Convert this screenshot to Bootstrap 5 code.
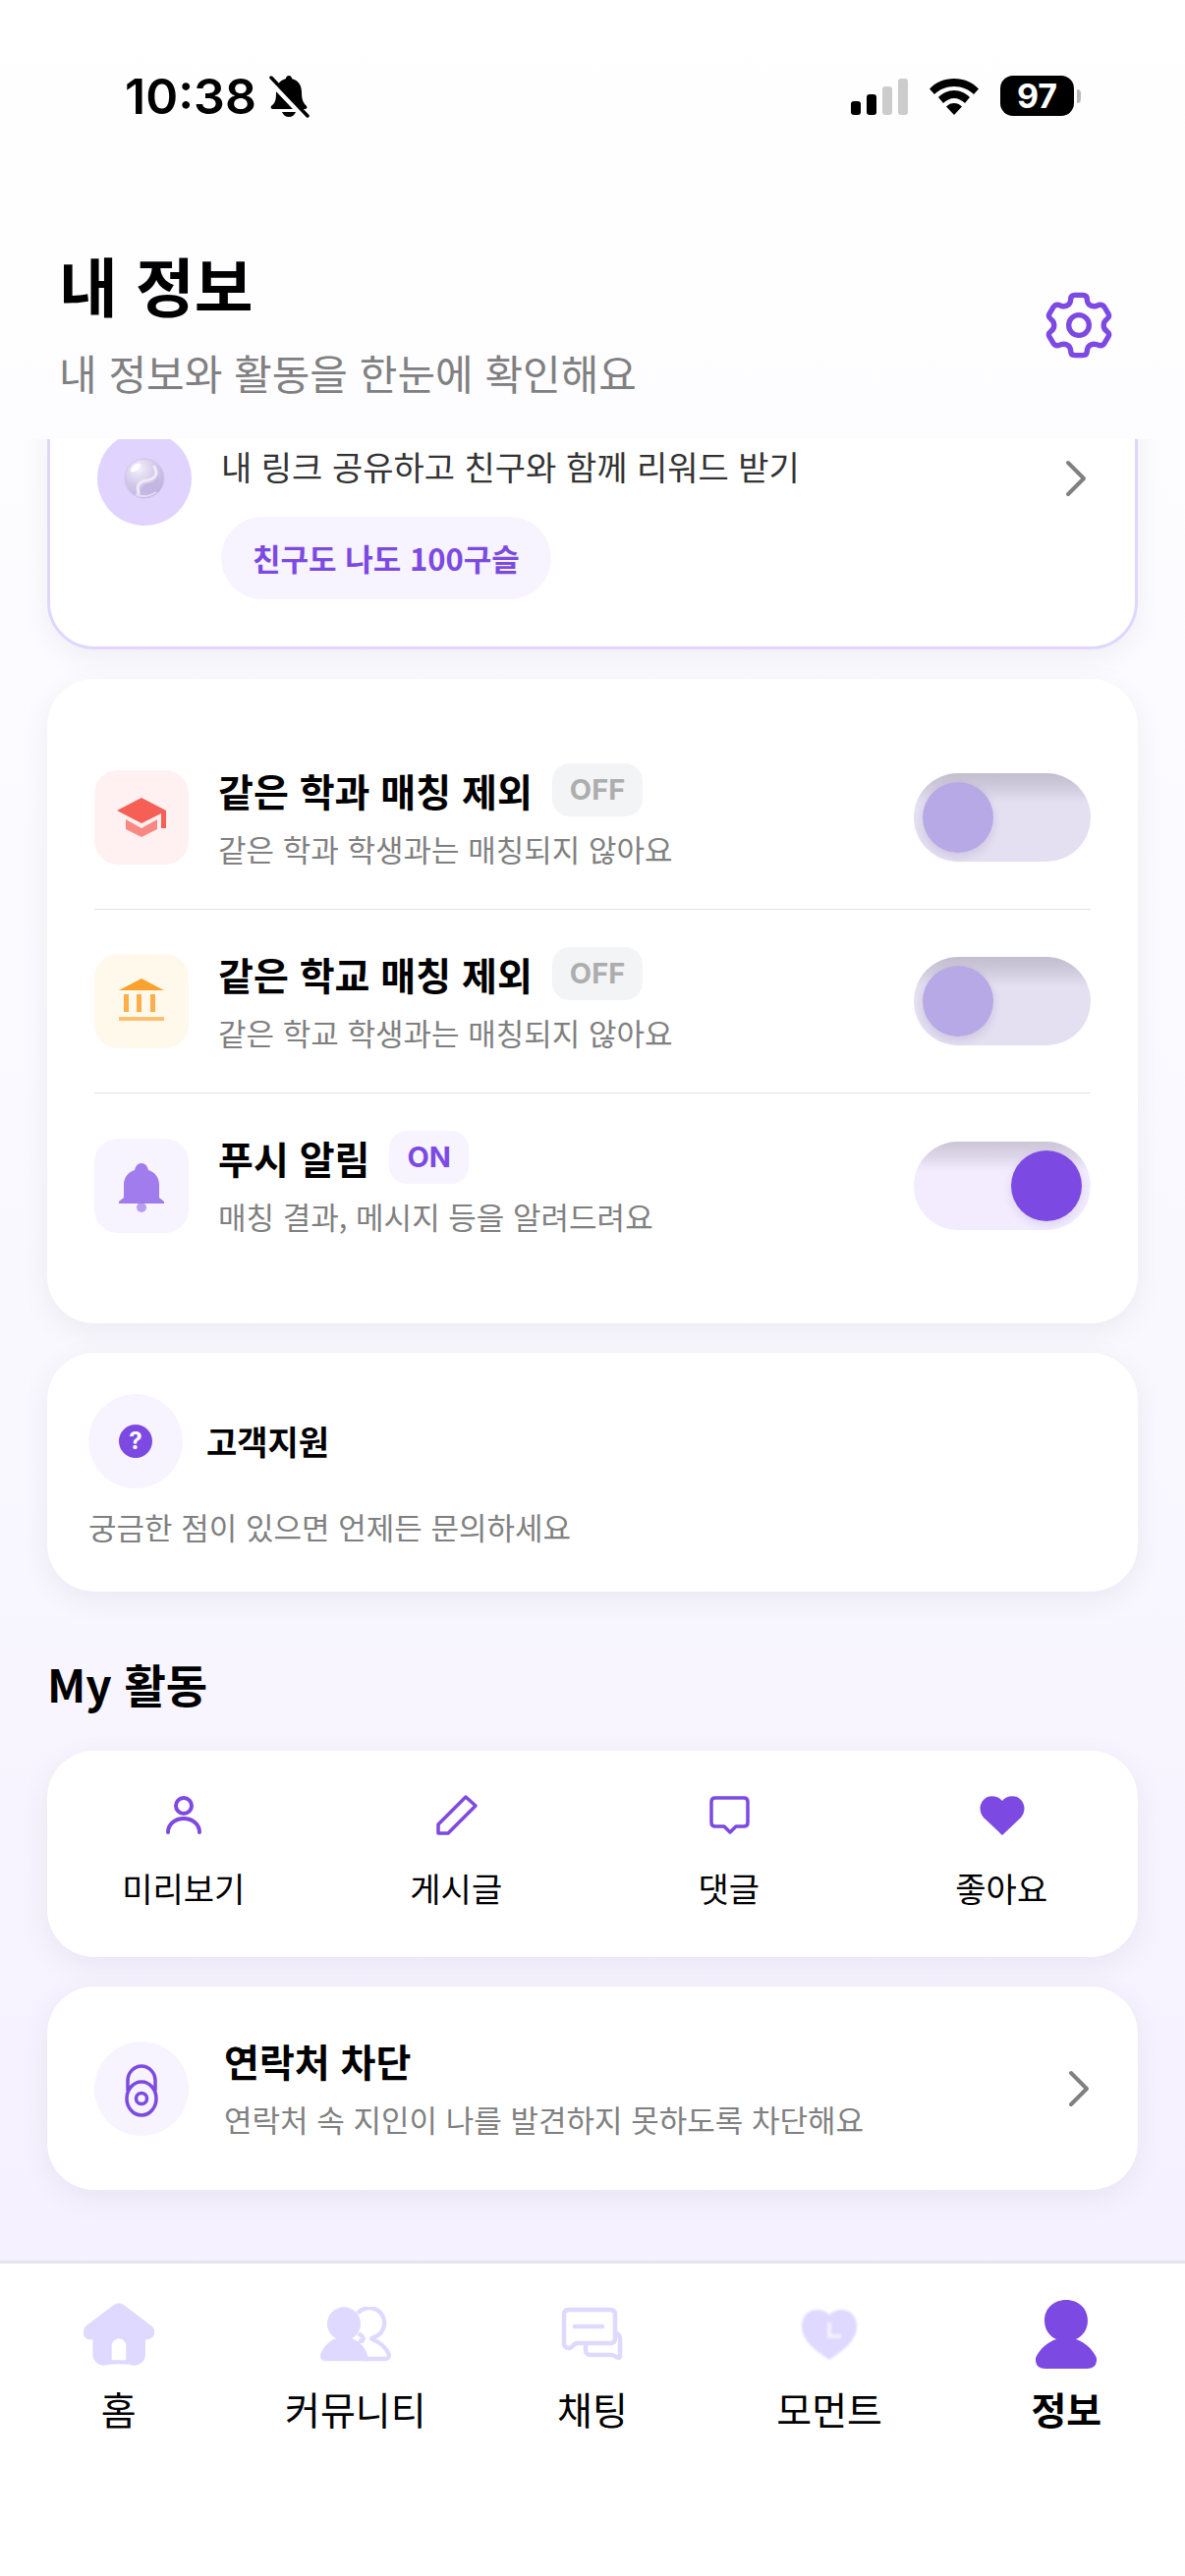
<!DOCTYPE html>
<html lang="ko">
<head>
<meta charset="utf-8">
<meta name="viewport" content="width=device-width, initial-scale=1">
<title>내 정보</title>
<link href="https://cdn.jsdelivr.net/npm/bootstrap@5.3.0/dist/css/bootstrap.min.css" rel="stylesheet">
<style>
:root{--violet:#7c4ae2;--lilac:#e0d6ff;--mist:#f7f4ff;--muted:#808080}
body{font-family:"Noto Sans CJK KR","Noto Sans",sans-serif;font-size:31px;line-height:48px;color:#000;background:linear-gradient(180deg,#fff 0%,#fdfcff 17%,#f9f8ff 52%,#f6f2ff 80%,#f5f0ff 100%)}
a{color:inherit;text-decoration:none}
svg{display:block;flex:none}
.status-bar{height:195px;padding:0 106px 0 127px;font-family:Inter,"Liberation Sans",sans-serif}
.status-left{gap:12px}
.status-right{gap:22px}
.clock{font-size:50px;font-weight:600}
.battery{width:75px;height:41px;border-radius:13px;background:#000;color:#fff;font-size:34px;font-weight:700;line-height:41px}
.battery-nub{width:4px;height:14px;border-radius:0 6px 6px 0;background:#b8b8b8;margin-left:3px}
.page-head{height:252px;padding:52px 72px 0 60px}
.page-title{font-size:65px;line-height:84px;font-weight:700}
.page-sub{font-size:42px;line-height:60px;margin-top:18px;color:var(--muted)}
.gear-btn{width:72px;height:72px;margin-top:48px}
.stack{gap:30px;padding:0 48px 72px}
.scroll-top{margin-top:-134px}
.panel{--bs-card-border-width:0;--bs-card-border-radius:48px;--bs-card-bg:#fff;--bs-card-color:#000;box-shadow:0 8px 32px rgba(10,5,30,.06)}
.invite{--bs-card-border-width:3px;--bs-card-border-color:var(--lilac);padding:48px}
.invite-text{padding-top:87px;margin-left:30px;gap:27px}
.invite-copy{font-size:34px;color:#333}
.reward{line-height:84px;border-radius:42px;padding:0 32px;background:var(--mist);color:var(--violet);font-weight:600}
.disc{width:96px;height:96px;flex:none}
.settings{padding:48px 48px 47px}
.setting{height:187px;border-bottom:1px solid #e3e3e6}
.setting:last-child{border-bottom:0}
.tile{width:96px;height:96px;border-radius:24px;flex:none}
.setting-text{margin-left:30px}
.block-text{margin-left:36px}
.item-title{font-size:39px;line-height:54px;font-weight:600}
.item-sub{line-height:48px;color:var(--muted);margin-top:9px}
.state{font-family:Inter,"Liberation Sans",sans-serif;font-size:29px;line-height:54px;font-weight:700;border-radius:18px;padding:0 18px;margin-left:20px;background:#f3f4f6;color:#adadad}
.state-on{background:var(--mist);color:var(--violet)}
.switch{appearance:none;width:180px;height:90px;flex:none;margin:0;border-radius:45px;padding:9px;background:linear-gradient(180deg,#c3bdcf 0,#d0cadd 14px,#e4dff1 30px);cursor:pointer}
.switch::before{content:"";display:block;width:72px;height:72px;border-radius:50%;background:#b7a9e6;box-shadow:0 4px 10px rgba(60,30,120,.12)}
.switch:checked{background:linear-gradient(180deg,#cbc5d6 0,#dcd5e8 14px,#f3ecff 30px)}
.switch:checked::before{margin-left:auto;background:var(--violet)}
.support{padding:42px}
.support-title{font-size:34px;font-weight:600;margin-left:24px}
.support-sub{color:var(--muted);margin-top:15px;line-height:48px}
.q-mark{width:34px;height:34px;background:var(--violet);color:#fff;font-family:Inter,sans-serif;font-size:24px;line-height:34px;font-weight:700}
.section-title{font-size:46px;line-height:66px;font-weight:600;margin:30px 0 6px}
.activity{padding:42px 0 46px}
.activity a{gap:26px;font-size:34px}
.contact{padding:0 48px;height:207px}
.tab-bar{border-top:3px solid #e3e6ea;background:#fff;padding:35px 0 142px}
.tab-bar a{font-size:39px;line-height:57px;gap:10px}
.tab-icon{height:74px}
</style>
</head>
<body>
<div class="min-vh-100 d-flex flex-column">
<div class="status-bar d-flex align-items-center justify-content-between">
  <div class="status-left d-flex align-items-center">
    <span class="clock">10:38</span>
    <svg width="42" height="44" viewBox="0 0 42 44" aria-label="무음"><path d="M21 1C22.500 1 24 2.200 24 4C31 6 34 11 34 18C34 26 36 29 39 32C40 34 39 35 37 35H5C3 35 2 34 3 32C7 29 8 26 8 18C8 11 11 6 18 4C18 2.200 19.500 1 21 1ZM14 38H28Q26 43 21 43T14 38Z"/><path d="M0 5L37 44" stroke="#fff" stroke-width="5"/><path d="M3 3L40 42" stroke="#000" stroke-width="3.500" stroke-linecap="round"/></svg>
  </div>
  <div class="status-right d-flex align-items-center">
    <svg width="58" height="38" viewBox="0 0 58 38"><rect y="24" width="10" height="14" rx="3"/><rect x="16" y="17" width="10" height="21" rx="3"/><rect x="32" y="9" width="10" height="29" rx="3" fill="#ccc"/><rect x="48" y="1" width="10" height="37" rx="3" fill="#ccc"/></svg>
    <svg width="50" height="38" viewBox="0 0 50 38"><path d="M25 1C15 1 6 5 0 11.500L5 17C10 12 17 9 25 9S40 12 45 17L50 11.500C44 5 35 1 25 1ZM25 13C18.500 13 13 16 9 20L14 26C17 23 21 21 25 21S33 23 36 26L41 20C37 16 31.500 13 25 13ZM25 26C22 26 19.500 27 17 29.500L25 38L33 29.500C30.500 27 28 26 25 26Z"/></svg>
    <div class="d-flex align-items-center"><span class="battery text-center">97</span><span class="battery-nub"></span></div>
  </div>
</div>
<header class="page-head d-flex justify-content-between align-items-start">
  <div>
    <h1 class="page-title mb-0">내 정보</h1>
    <p class="page-sub mb-0">내 정보와 활동을 한눈에 확인해요</p>
  </div>
  <button type="button" class="gear-btn btn border-0 p-0 d-flex align-items-center justify-content-center" aria-label="설정">
    <svg width="68" height="68" viewBox="102 80 204 204" fill="none" stroke="#7c4ae2" stroke-width="16" stroke-linejoin="round"><path d="M192 90H216Q229 90 229 103C229 118 242 128 258 123C268 118 277 119 282 127L294 147Q299 156 290 163C276 172 276 192 290 201Q299 208 294 217L282 237C277 245 268 246 258 241C242 236 229 246 229 261Q229 274 216 274H192Q179 274 179 261C179 246 166 236 150 241C140 246 131 245 126 237L114 217Q109 208 118 201C132 192 132 172 118 163Q109 156 114 147L126 127C131 119 140 118 150 123C166 128 179 118 179 103Q179 90 192 90Z"/><circle cx="204" cy="182" r="31"/></svg>
  </button>
</header>

<main class="overflow-hidden flex-grow-1">
<div class="stack scroll-top d-flex flex-column">
  <a href="#" class="card panel invite flex-row align-items-center">
    <span class="disc rounded-circle d-flex align-items-center justify-content-center" style="background:#e0d4ff">
      <svg width="42" height="42" viewBox="0 0 42 42"><defs><radialGradient id="marble" cx=".35" cy=".25" r=".85"><stop offset="0" stop-color="#f3f0fa"/><stop offset=".5" stop-color="#d3caea"/><stop offset="1" stop-color="#b9addb"/></radialGradient></defs><circle cx="21" cy="21" r="20" fill="url(#marble)" stroke="#cfc4ec"/><path d="M31 9C36 17 31 22 23 23C15 24 13 29 15 36" fill="none" stroke="#eeeafa" stroke-width="3" stroke-linecap="round"/><path d="M18 35C17 28 22 26 27 26C31 25 34 22 35 19C38 28 29 39 18 35Z" fill="#c2b6e2"/><ellipse cx="12" cy="10" rx="6" ry="3" transform="rotate(-38 12 10)" fill="#fff"/><path d="M12 37Q22 42 33 35" stroke="#e4ddf6" stroke-width="2" fill="none"/></svg>
    </span>
    <span class="invite-text d-flex flex-column align-items-start flex-grow-1">
      <span class="invite-copy">내 링크 공유하고 친구와 함께 리워드 받기</span>
      <span class="reward">친구도 나도 100구슬</span>
    </span>
    <svg width="24" height="40" viewBox="0 0 24 40" fill="none" stroke="#808080" stroke-width="4" stroke-linecap="round" stroke-linejoin="round"><path d="M4 4L20 20L4 36"/></svg>
  </a>

  <section class="card panel settings">
    <div class="setting d-flex align-items-center">
      <span class="tile" style="background:#fff1f1"><svg width="96" height="96" viewBox="0 0 96 96" fill="#f55f56"><path d="M48 28L73 41V59H68V44L48 54L23 41Z"/><path d="M32 50L48 59L64 50V60L48 68L32 60Z" opacity=".72"/></svg></span>
      <label for="sw1" class="setting-text flex-grow-1"><span class="d-flex align-items-center"><span class="item-title">같은 학과 매칭 제외</span><span class="state">OFF</span></span><span class="item-sub d-block">같은 학과 학생과는 매칭되지 않아요</span></label>
      <input id="sw1" class="switch" type="checkbox" role="switch">
    </div>
    <div class="setting d-flex align-items-center">
      <span class="tile" style="background:#fff9ec"><svg width="96" height="96" viewBox="0 0 96 96" fill="#fba12e"><path d="M48 25L71 37H25Z"/><path d="M30 41H35V59H30ZM43 41H48V59H43ZM57 41H62V59H57Z" opacity=".85"/><path d="M25 64H71V68H25Z" opacity=".65"/></svg></span>
      <label for="sw2" class="setting-text flex-grow-1"><span class="d-flex align-items-center"><span class="item-title">같은 학교 매칭 제외</span><span class="state">OFF</span></span><span class="item-sub d-block">같은 학교 학생과는 매칭되지 않아요</span></label>
      <input id="sw2" class="switch" type="checkbox" role="switch">
    </div>
    <div class="setting d-flex align-items-center">
      <span class="tile" style="background:#f7f4ff"><svg width="96" height="96" viewBox="0 0 96 96" fill="#a17cec"><path d="M48 25C52 25 54 28 55 32C62 34 66 40 66 47V60L71 64V66H25V64L30 60V47C30 40 34 34 41 32C42 28 44 25 48 25Z"/><circle cx="48" cy="70" r="5" opacity=".72"/></svg></span>
      <label for="sw3" class="setting-text flex-grow-1"><span class="d-flex align-items-center"><span class="item-title">푸시 알림</span><span class="state state-on">ON</span></span><span class="item-sub d-block">매칭 결과, 메시지 등을 알려드려요</span></label>
      <input id="sw3" class="switch" type="checkbox" role="switch" checked>
    </div>
  </section>

  <a href="#" class="card panel support">
    <span class="d-flex align-items-center">
      <span class="disc rounded-circle d-flex align-items-center justify-content-center" style="background:#f7f4ff"><span class="q-mark rounded-circle text-center">?</span></span>
      <span class="support-title">고객지원</span>
    </span>
    <span class="support-sub">궁금한 점이 있으면 언제든 문의하세요</span>
  </a>

  <h2 class="section-title">My 활동</h2>

  <section class="card panel activity">
    <div class="row g-0">
      <a href="#" class="col-3 d-flex flex-column align-items-center"><svg width="48" height="48" viewBox="0 0 48 48" fill="none" stroke="#7c4ae2" stroke-width="4" stroke-linecap="round"><circle cx="24" cy="14" r="8"/><path d="M8 41C8 33 15 27 24 27S40 33 40 41"/></svg>미리보기</a>
      <a href="#" class="col-3 d-flex flex-column align-items-center"><svg width="48" height="48" viewBox="0 0 48 48" fill="none" stroke="#7c4ae2" stroke-width="3.500" stroke-linejoin="round"><path d="M34 5L44 14L16 42H6V33Z"/></svg>게시글</a>
      <a href="#" class="col-3 d-flex flex-column align-items-center"><svg width="48" height="48" viewBox="0 0 48 48" fill="none" stroke="#7c4ae2" stroke-width="3.500" stroke-linejoin="round"><path d="M10 6H39Q43 6 43 10V31Q43 35 39 35H31L25 41L19 35H10Q6 35 6 31V10Q6 6 10 6Z"/></svg>댓글</a>
      <a href="#" class="col-3 d-flex flex-column align-items-center"><svg width="48" height="48" viewBox="0 0 48 48" fill="#7c4ae2"><path d="M25 44L6 26C0 19 2 9 10 5C16 3 22 5 25 9C28 5 34 3 40 5C48 9 50 19 44 26Z"/></svg>좋아요</a>
    </div>
  </section>

  <a href="#" class="card panel contact flex-row align-items-center">
    <span class="disc rounded-circle" style="background:#f7f4ff"><svg width="96" height="96" viewBox="0 0 96 96" fill="none" stroke="#7c4ae2" stroke-width="3.500"><path d="M34 50V40A14 15 0 0 1 62 40V50"/><ellipse cx="48" cy="58" rx="15" ry="17"/><circle cx="48" cy="58" r="5.500"/></svg></span>
    <span class="block-text flex-grow-1"><span class="item-title d-block">연락처 차단</span><span class="item-sub d-block">연락처 속 지인이 나를 발견하지 못하도록 차단해요</span></span>
    <svg width="24" height="40" viewBox="0 0 24 40" fill="none" stroke="#808080" stroke-width="4" stroke-linecap="round" stroke-linejoin="round"><path d="M4 4L20 20L4 36"/></svg>
  </a>
</div>
</main>

<nav class="tab-bar">
  <div class="row row-cols-5 g-0">
    <a href="#" class="col d-flex flex-column align-items-center"><span class="tab-icon d-flex align-items-center"><svg width="72" height="64" viewBox="45 43 216 192" fill="#e0d9ff"><path fill-rule="evenodd" d="M138 49Q153 39 168 49L252 113C270 127 262 155 238 155H234V200A34 34 0 0 1 186 231Q153 229 121 231A34 34 0 0 1 73 200V155H66C42 155 38 127 53 113ZM131 218V174A22 22 0 0 1 175 174V218Z"/></svg></span>홈</a>
    <a href="#" class="col d-flex flex-column align-items-center"><span class="tab-icon d-flex align-items-center"><svg width="72" height="56" viewBox="768 52 216 168" fill="#e0d9ff"><circle cx="840" cy="104" r="51"/><path d="M786 218Q766 218 768 198C778 172 798 152 825 146H855C882 152 905 175 912 198V218Z"/><path d="M882 72A46 46 0 1 1 932 145C922 148 922 151 932 153C950 160 970 178 977 197Q979 211 965 211H905M884 133L895 141Q903 149 895 157L885 156" fill="none" stroke="#e0d9ff" stroke-width="13"/></svg></span>커뮤니티</a>
    <a href="#" class="col d-flex flex-column align-items-center"><span class="tab-icon d-flex align-items-center"><svg width="64" height="58" viewBox="0 0 64 58" fill="none" stroke="#e0d9ff" stroke-width="4.500" stroke-linecap="round" stroke-linejoin="round"><path d="M8 4H50Q55 4 55 9V33Q55 38 50 38H17C12 38 12 43 8 43Q3 43 3 38V9Q3 4 8 4Z"/><path d="M56 28Q60 29 60 34V52C58 55 55 50 51 50H30Q25 50 25 45V39M14 21H42"/></svg></span>채팅</a>
    <a href="#" class="col d-flex flex-column align-items-center"><span class="tab-icon d-flex align-items-center"><svg width="60" height="56" viewBox="0 0 60 56"><path d="M30 54C20 47 2 36 2 20C2 8 10 3 17 3C23 3 27 5 30 8C33 5 37 3 43 3C50 3 58 8 58 20C58 36 40 47 30 54Z" fill="#e0d9ff" style="filter:blur(1px)"/><path d="M30 16V30H42" fill="none" stroke="#f3f0ff" stroke-width="4" style="filter:blur(1px)"/></svg></span>모먼트</a>
    <a href="#" class="col d-flex flex-column align-items-center fw-bold" aria-current="page"><span class="tab-icon d-flex align-items-center"><svg width="62" height="70" viewBox="0 0 62 70" fill="#7c4ae2"><path d="M31 0C44 0 53 9 53 21C53 30 48 37 41 40C50 43 58 50 62 59Q63 70 52 70H10Q-1 70 0 59C4 50 12 43 21 40C14 37 9 30 9 21C9 9 18 0 31 0Z"/></svg></span>정보</a>
  </div>
</nav>
</div>
<script src="https://cdn.jsdelivr.net/npm/bootstrap@5.3.0/dist/js/bootstrap.bundle.min.js"></script>
</body>
</html>
